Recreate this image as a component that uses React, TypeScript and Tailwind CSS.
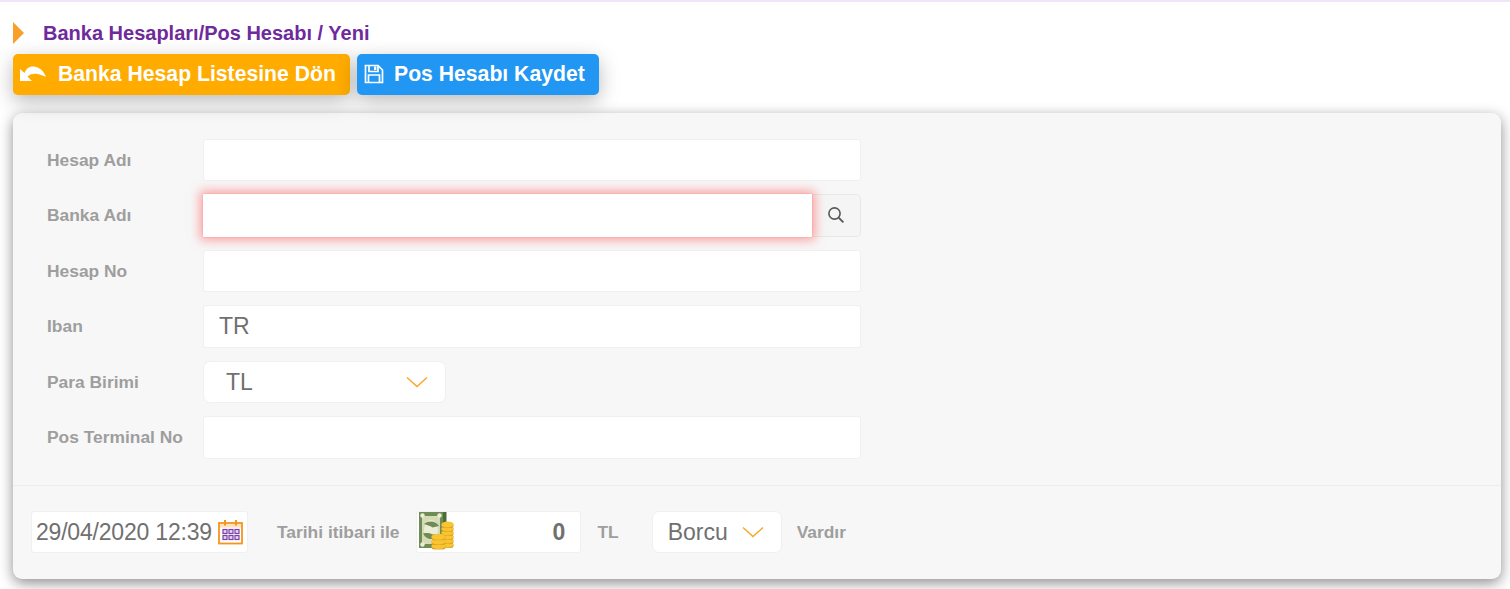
const inputClass =
  'h-[42.5px] w-[658px] rounded-[3px] border border-[#f0f0f0] bg-white px-[15px] text-[23px] tracking-[-0.1px] text-[#707070] outline-none';
const labelClass = 'w-[190px] pl-[34px] text-[17.4px] font-bold text-[#9e9e9e]';

function Chevron() {
  return (
    <svg width="22" height="12" viewBox="0 0 22 12" fill="none" stroke="#f9a52b" strokeWidth="1.4">
      <path d="M1 1.5 L11 10.5 L21 1.5" />
    </svg>
  );
}

function UndoIcon() {
  return (
    <svg width="28" height="20" viewBox="0 0 28 20" fill="white">
      <path d="M2 5 L2 17 L14 17 L9.5 12.5 C12.5 10 16 9.5 19.5 10 C22.5 10.5 25 11.5 28 13 C26 8 22 3 16 2.5 C11.5 2 8.5 4 6.5 9 Z" />
    </svg>
  );
}

function SaveIcon() {
  return (
    <svg width="20" height="20" viewBox="0 0 20 20" fill="none" stroke="white" strokeWidth="1.7">
      <path d="M1.5 1.5 H14 L18.5 6 V18.5 H1.5 Z" />
      <path d="M5 1.5 V7.5 H14 V1.5" />
      <rect x="10" y="2.5" width="2.4" height="3.5" fill="white" stroke="none" />
      <path d="M4.5 18.5 V11 H15.5 V18.5" />
    </svg>
  );
}

function SearchIcon() {
  return (
    <svg width="18" height="18" viewBox="0 0 18 18" fill="none" stroke="#5a5a5a" strokeWidth="1.6">
      <circle cx="7.5" cy="7.5" r="5.6" />
      <path d="M11.6 11.6 L16.4 16.4" strokeWidth="1.9" />
    </svg>
  );
}

function CalendarIcon() {
  const cells = [0, 1, 2];
  return (
    <svg width="26" height="26" viewBox="0 0 26 26">
      <rect x="1" y="4" width="23" height="20.5" fill="#fff" stroke="#f7941d" strokeWidth="1.8" />
      <rect x="2" y="5" width="21" height="3.6" fill="#fde3c2" />
      <rect x="6" y="1" width="2" height="5.5" fill="#f7941d" />
      <rect x="17" y="1" width="2" height="5.5" fill="#f7941d" />
      {cells.map((c) =>
        [0, 1].map((r) => (
          <rect
            key={`${c}-${r}`}
            x={5 + c * 6}
            y={10.5 + r * 6}
            width="4"
            height="4"
            fill="#e4d4ee"
            stroke="#7b3fa8"
            strokeWidth="1.2"
          />
        )),
      )}
    </svg>
  );
}

function MoneyIcon() {
  const coin = (x: number, y: number, w: number, key: string) => (
    <g key={key}>
      <rect x={x} y={y} width={w} height="5.5" rx="2.5" fill="#dfa328" />
      <ellipse cx={x + w / 2} cy={y + 2} rx={w / 2} ry="3" fill="#f8c531" />
    </g>
  );
  return (
    <svg width="36" height="40" viewBox="0 0 36 40" className="-mt-[2px]">
      <rect x="22" y="1" width="5.5" height="36" fill="#4f6b3b" />
      <rect x="0" y="1" width="24" height="36" fill="#6f8c55" />
      <rect x="3" y="5" width="18" height="28" fill="#d5dbb6" />
      <ellipse cx="12" cy="19" rx="7" ry="10" fill="#ecedd6" />
      <path d="M5 13 C10 9 17 10 20 15 L13.5 16.5 C11 14.5 8 14 5 13 Z" fill="#6f8c55" />
      <path d="M4 22.5 C9 21.5 11.5 22.5 14 23.5 L20 23 C15 30 8 30 4 22.5 Z" fill="#6f8c55" />
      <circle cx="3.5" cy="4.5" r="2.2" fill="#ecedd6" />
      <circle cx="20.5" cy="4.5" r="2.2" fill="#ecedd6" />
      <circle cx="3.5" cy="33.5" r="2.2" fill="#ecedd6" />
      {[0, 1, 2, 3, 4, 5].map((i) => coin(22.5, 31.5 - i * 4, 12, `a${i}`))}
      {[0, 1, 2].map((i) => coin(12.5, 33 - i * 4.6, 14, `b${i}`))}
    </svg>
  );
}

export default function App() {
  return (
    <div className="h-[589px] overflow-hidden border-t-2 border-[#f1e6f8] bg-white font-['Liberation_Sans',Arial,sans-serif]">
      <div className="px-[13px] pt-[20px]">
        <div className="flex h-[22px] items-center">
          <div className="h-0 w-0 border-y-[11px] border-l-[11px] border-y-transparent border-l-[#f9a02b]" />
          <h1 className="ml-[19px] text-[20px] font-bold text-[#6f2a9c]">Banka Hesapları/Pos Hesabı / Yeni</h1>
        </div>

        <div className="mt-[10px] flex gap-[7px]">
          <button className="flex h-[41px] w-[337px] items-center rounded-[5px] bg-[#ffab00] pb-[2px] pl-[5px] text-[21.2px] font-bold text-white shadow-[0_6px_20px_rgba(0,0,0,0.28)]">
            <UndoIcon />
            <span className="ml-[12px]">Banka Hesap Listesine Dön</span>
          </button>
          <button className="flex h-[41px] w-[242px] items-center rounded-[5px] bg-[#2196f3] pb-[2px] pl-[7px] text-[21.2px] font-bold text-white shadow-[0_6px_20px_rgba(0,0,0,0.28)]">
            <SaveIcon />
            <span className="ml-[10px]">Pos Hesabı Kaydet</span>
          </button>
        </div>

        <div className="mt-[18px] h-[466px] w-[1488px] rounded-[9px] bg-[#f7f7f7] pt-[25.6px] shadow-[0_4px_14px_rgba(0,0,0,0.45)]">
          <div className="flex flex-col gap-[13px]">
            <div className="flex items-center">
              <label className={labelClass}>Hesap Adı</label>
              <input className={inputClass} defaultValue="" />
            </div>
            <div className="flex items-center">
              <label className={labelClass}>Banka Adı</label>
              <div className="flex h-[42.5px] w-[658px]">
                <input className="z-10 h-full w-[609px] bg-white shadow-[0_0_1px_rgba(240,90,90,0.6),0_0_10px_3px_rgba(255,100,100,0.6)] outline-none" />
                <button className="flex flex-1 items-center justify-center rounded-r-[5px] border border-l-0 border-[#e8e8e8] bg-[#f5f5f5]">
                  <SearchIcon />
                </button>
              </div>
            </div>
            <div className="flex items-center">
              <label className={labelClass}>Hesap No</label>
              <input className={inputClass} defaultValue="" />
            </div>
            <div className="flex items-center">
              <label className={labelClass}>Iban</label>
              <input className={inputClass} defaultValue="TR" />
            </div>
            <div className="flex items-center">
              <label className={labelClass}>Para Birimi</label>
              <div className="flex h-[42.5px] w-[243px] items-center justify-between rounded-[7px] border border-[#f0f0f0] bg-white pr-[17px] pl-[22px] text-[23px] text-[#707070]">
                TL
                <Chevron />
              </div>
            </div>
            <div className="flex items-center">
              <label className={labelClass}>Pos Terminal No</label>
              <input className={inputClass} defaultValue="" />
            </div>
          </div>

          <div className="mt-[26.4px] flex h-[94px] items-center border-t border-[#f0efe6] pl-[18px]">
            <div className="flex h-[42px] w-[217px] items-center rounded-[3px] border border-[#f0f0f0] bg-white pl-[4px] text-[23px] tracking-[-0.2px] text-[#707070]">
              29/04/2020 12:39
              <span className="ml-[6px] flex"><CalendarIcon /></span>
            </div>
            <span className="ml-[29px] text-[17.4px] font-bold text-[#9e9e9e]">Tarihi itibari ile</span>
            <div className="ml-[17px] flex h-[42px] w-[165px] items-center justify-between rounded-[3px] border border-[#f0f0f0] bg-white pr-[15px] pl-[2px] text-[23px] font-bold text-[#707070]">
              <MoneyIcon />
              0
            </div>
            <span className="ml-[16px] text-[17.4px] font-bold text-[#9e9e9e]">TL</span>
            <div className="ml-[33px] flex h-[42px] w-[130px] items-center justify-between rounded-[7px] border border-[#f0f0f0] bg-white pr-[17px] pl-[15px] text-[23px] text-[#707070]">
              Borcu
              <Chevron />
            </div>
            <span className="ml-[15px] text-[17.4px] font-bold text-[#9e9e9e]">Vardır</span>
          </div>
        </div>
      </div>
    </div>
  );
}
